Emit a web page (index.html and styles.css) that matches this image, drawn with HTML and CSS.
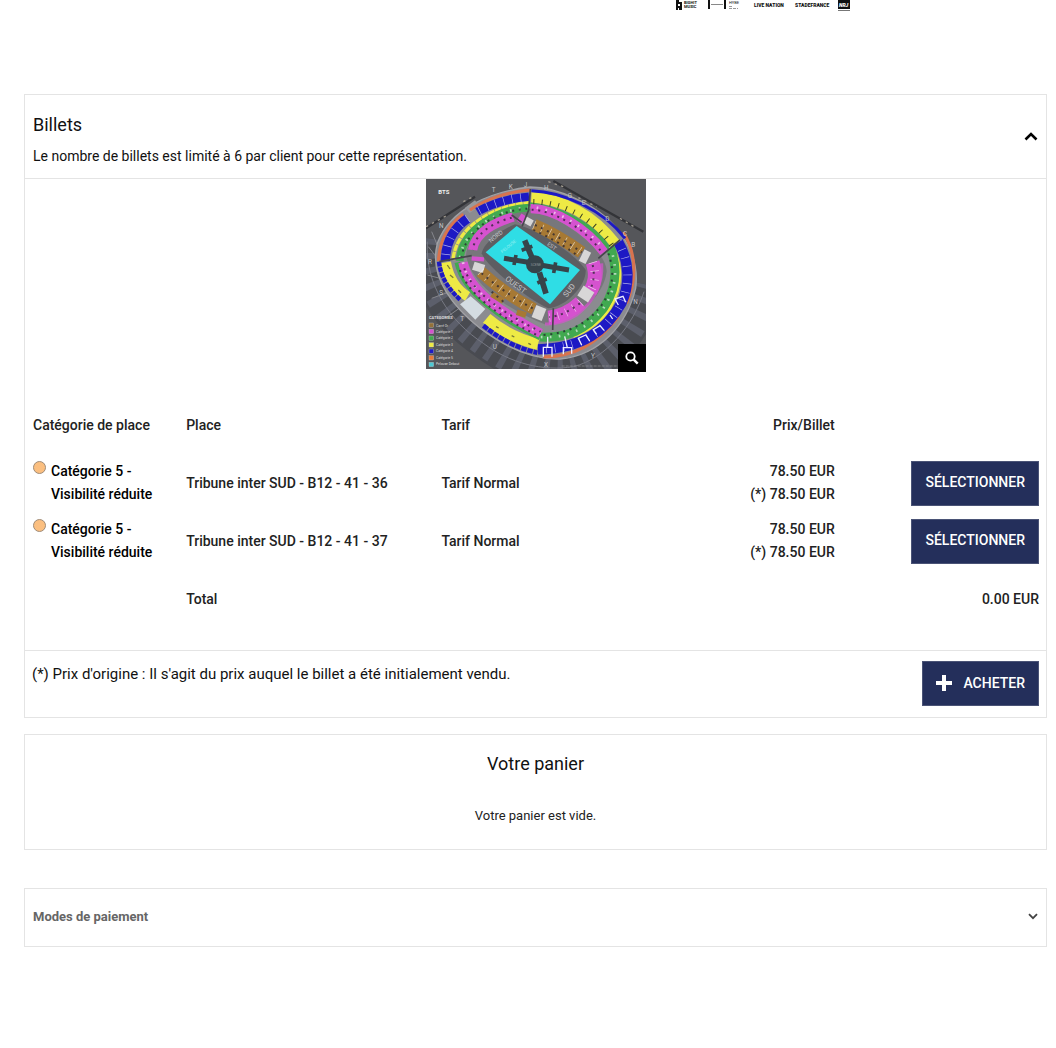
FILE: index.html
```html
<!DOCTYPE html>
<html lang="fr">
<head>
    <meta charset="UTF-8">
    <meta name="viewport" content="width=device-width, initial-scale=1.0">
    <title>Billets</title>
    <link rel="stylesheet" href="styles.css">
</head>
<body>
    <header class="partners">
        <svg class="partners-logos" width="176" height="11" viewBox="0 0 176 11" role="img" aria-label="Partenaires">
            <path d="M1 0h3v2h3v8h-3v-2h-1v2h-2zM3 4v2h2v-2z" fill="#111"/>
            <text x="9" y="4" font-size="4" font-weight="700">BIGHIT</text>
            <text x="9" y="8" font-size="4" font-weight="700">MUSIC</text>
            <path d="M33 0h2v9h-2zM49 0h2v9h-2z" fill="#111"/>
            <path d="M36 4.500h12" stroke="#888" stroke-width="1"/>
            <text x="54" y="4" font-size="4">HYBE</text>
            <path d="M54 6.500h3M54 8.500h9" stroke="#999" stroke-width="1" stroke-dasharray="3 1"/>
            <text x="79" y="7" font-size="5" font-weight="900">LIVE NATION</text>
            <text x="120" y="7" font-size="5" font-weight="900">STADEFRANCE</text>
            <rect x="163" width="12" height="9" fill="#111"/>
            <text class="nrj" x="164" y="7" font-size="5" font-weight="900">NRJ</text>
            <path d="M163 10.500h12" stroke="#777" stroke-width="1"/>
        </svg>
    </header>

    <main>
        <section class="card tickets">
            <div class="card-header">
                <div>
                    <h2>Billets</h2>
                    <p>Le nombre de billets est limité à 6 par client pour cette représentation.</p>
                </div>
                <button class="toggle" type="button" aria-label="Replier">
                    <svg width="14" height="9" viewBox="0 0 14 9"><path d="M1.500 7.500L7 2l5.500 5.500" fill="none" stroke="#000" stroke-width="2.600"/></svg>
                </button>
            </div>

            <div class="map">
                <svg class="map-plan" viewBox="18 12 660 570" role="img" aria-label="Plan de salle BTS">
                    <rect x="18" y="12" width="660" height="570" fill="#55565a"/>
                    <path d="M18 160L165 65M400 18L670 170" stroke="#333438" stroke-width="7"/>
                    <path d="M18 155L80 122M130 80L165 62M385 20L430 35M475 68L530 95M600 130L650 160" stroke="#a39c90" stroke-width="4" stroke-dasharray="7 13"/>

                    <!-- roof beams -->
                    <g fill="none">
                        <path d="M25 190C5 330 90 430 190 500C270 560 370 610 460 590C580 560 660 440 685 330" stroke="#494b51" stroke-width="100"/>
                        <path d="M25 190C5 330 90 430 190 500C270 560 370 610 460 590C580 560 660 440 685 330" stroke="#5c5f6b" stroke-width="84" stroke-dasharray="18 26"/>
                        <path d="M22 200C15 330 90 440 190 505C270 565 370 590 460 575C560 550 640 450 672 350" stroke="#777983" stroke-width="3"/>
                        <path d="M35 170L60 230M25 215L52 250M22 300L60 310M35 370L90 350M75 430L125 395" stroke="#85868c" stroke-width="3"/>
                    </g>

                    <!-- bowl -->
                    <path d="M330 36C210 50 90 100 52 205C30 290 75 375 180 460C260 520 340 555 420 552C540 540 620 450 647 340C660 240 600 130 470 72C420 48 370 36 330 36Z" fill="#8b8b90" stroke="#a2a2a6" stroke-width="4"/>
                    <path d="M280 115C220 130 145 180 138 240C150 320 250 400 380 450C460 440 550 370 560 290C560 230 450 140 330 100Z" fill="#77777b"/>
                    <path d="M135 98l30-22 14 18-30 20z" fill="#98999d"/>

                    <g fill="none">
                        <g stroke="#d9734e" stroke-width="9">
                            <path d="M331 45C270 49 200 70 150 105"/>
                            <path d="M130 118C85 150 60 190 55 258"/>
                            <path d="M610 172C645 230 655 300 620 385"/>
                            <path d="M595 425C530 510 460 545 370 546"/>
                        </g>
                        <g stroke="#eeea45">
                            <path d="M330 83C230 90 108 150 99 255" stroke-width="10" stroke-dasharray="20 2"/>
                            <path d="M334 67C430 72 520 120 585 205" stroke-width="32"/>
                            <path d="M582 225C608 280 605 340 570 400C540 445 500 470 460 485" stroke-width="8"/>
                            <path d="M78 262C87 310 107 343 143 364" stroke-width="30"/>
                            <path d="M200 430C243 467 303 495 354 508" stroke-width="34"/>
                        </g>
                        <g stroke="#1d19c4">
                            <path d="M329 65C270 69 215 86 172 110" stroke-width="25"/>
                            <path d="M143 130C100 160 77 200 76 258" stroke-width="28"/>
                            <path d="M334 47C430 50 550 105 615 190" stroke-width="9"/>
                            <path d="M594 200C630 260 630 330 604 385C560 465 490 520 354 523" stroke-width="31"/>
                            <path d="M57 260C62 308 87 343 120 374" stroke-width="13" stroke-dasharray="14 3"/>
                            <path d="M190 452C245 496 298 522 352 533" stroke-width="14" stroke-dasharray="16 3"/>
                        </g>
                        <g stroke="#41a950">
                            <path d="M328 98C240 100 125 160 119 258" stroke-width="23"/>
                            <path d="M330 88C420 98 520 145 570 225" stroke-width="12"/>
                            <path d="M570 215C595 280 590 340 550 400C500 465 440 490 360 486" stroke-width="27"/>
                            <path d="M112 262C130 350 240 430 360 487" stroke-width="17"/>
                        </g>
                        <g stroke="#d552cf">
                            <path d="M280 126C230 140 165 170 158 225" stroke-width="28"/>
                            <path d="M298 142L312 120" stroke-width="18"/>
                            <path d="M332 101C400 100 500 160 552 232" stroke-width="28"/>
                            <path d="M129 262C145 350 250 415 362 475" stroke-width="28"/>
                            <path d="M155 250L192 253" stroke-width="13"/>
                            <path d="M518 262C530 300 525 325 510 350" stroke-width="42"/>
                            <path d="M482 382C450 412 415 425 385 428" stroke-width="42"/>
                            <path d="M545 265C550 330 520 380 470 420C430 446 400 448 375 447" stroke-width="9" opacity=".7"/>
                        </g>
                        <g stroke="#a77934">
                            <path d="M342 150C390 170 440 200 485 232" stroke-width="38"/>
                            <path d="M182 290C220 325 280 370 342 402" stroke-width="36"/>
                            <path d="M215 358L250 378M290 412L318 420" stroke-width="17"/>
                        </g>
                        <g stroke="#d8d7d7">
                            <path d="M320 148L330 130" stroke-width="26"/>
                            <path d="M485 240L505 250" stroke-width="38"/>
                            <path d="M160 272L192 282" stroke-width="25"/>
                            <path d="M342 408L372 420" stroke-width="38"/>
                            <path d="M507 342L488 372" stroke-width="38"/>
                        </g>
                    </g>
                    <path d="M120 388l32-24 44 38-30 32z" fill="#d4dce2"/>

                    <!-- seat marks and aisles -->
                    <g fill="none">
                        <g stroke="#fff" stroke-width="26" stroke-dasharray="2 24" opacity=".65">
                            <path d="M329 65C270 69 215 86 172 110"/>
                            <path d="M143 130C100 160 77 200 76 258"/>
                            <path d="M594 200C630 260 630 330 604 385C560 465 490 520 354 523"/>
                            <path d="M518 262C530 300 525 325 510 350M482 382C450 412 415 425 385 428"/>
                            <path d="M342 150C390 170 440 200 485 232M182 290C220 325 280 370 342 402"/>
                        </g>
                        <g stroke="#fff" stroke-width="8" stroke-dasharray="5 22" opacity=".6">
                            <path d="M328 98C240 100 125 160 119 258"/>
                            <path d="M570 215C595 280 590 340 550 400C500 465 440 490 360 486"/>
                            <path d="M350 98C420 110 500 160 552 222"/>
                            <path d="M129 262C145 350 250 415 362 475"/>
                        </g>
                        <g stroke="#262330" stroke-width="6" stroke-dasharray="6 14" opacity=".75">
                            <path d="M275 128C230 140 165 170 158 225"/>
                            <path d="M322 101C240 105 130 160 123 258"/>
                            <path d="M335 104C400 106 500 163 545 232"/>
                            <path d="M345 150C390 170 440 200 485 232M340 165C385 185 430 210 470 240"/>
                            <path d="M185 295C220 325 280 370 342 402M215 350L250 380"/>
                            <path d="M133 280C155 350 250 415 362 470"/>
                            <path d="M518 270C525 300 520 325 510 345M480 385C450 408 415 425 388 426"/>
                            <path d="M565 235C585 290 580 340 545 390C500 450 440 475 370 480"/>
                            <path d="M120 285C145 360 240 425 350 480"/>
                        </g>
                        <path d="M340 80C430 82 520 130 575 210" stroke="#3b4220" stroke-width="16" stroke-dasharray="3 22"/>
                        <path d="M82 270l8 12M90 300l10 8M115 345l8 8M228 455l8 4M275 482l8 4M325 505l8 4" stroke="#777a35" stroke-width="4"/>
                        <path d="M331 42L326 105L302 165M535 250L600 195M58 260L155 242M275 120l30 22M400 400l-2 65" stroke="#46464c" stroke-width="5"/>
                        <g stroke="#eef" stroke-width="4">
                            <path d="M370 545v-28h26v28M383 517v-32M430 538v-20h25v18M442 518l-8-34"/>
                            <path d="M485 510l-10-20 22-10 12 18M530 478l-10-14 20-12 12 14M578 432l-8-12M595 390l-10-18 24-8 8 18"/>
                        </g>
                    </g>

                    <!-- pitch and stage -->
                    <path d="M285 148C240 165 190 205 185 235C200 275 320 370 385 400C440 395 500 330 497 285C470 240 350 160 285 148Z" fill="#5d5e62"/>
                    <path d="M290 153L480 285L390 388L197 232Z" fill="#2fdde5"/>
                    <g stroke="#37444a" fill="none">
                        <path d="M314 196L336 248M358 292L378 356" stroke-width="17"/>
                        <path d="M252 250L325 262M365 271L447 285" stroke-width="15"/>
                        <path d="M305 226l32-12M352 324l28-12M288 240l-6 30M407 262l-6 32" stroke-width="11"/>
                    </g>
                    <circle cx="345" cy="268" r="27" fill="#37444a"/>
                    <g class="map-text">
                        <text x="332" y="272" font-size="10" fill="#8b9599">SCENE</text>
                        <text x="55" y="56" font-size="18" font-weight="700" fill="#eee">BTS</text>
                        <text transform="translate(212 204) rotate(-38)" font-size="18">NORD</text>
                        <text transform="translate(380 210) rotate(35)" font-size="17">EST</text>
                        <text transform="translate(254 314) rotate(37)" font-size="23">OUEST</text>
                        <text transform="translate(440 368) rotate(-52)" font-size="23">SUD</text>
                        <text transform="translate(247 235) rotate(-40)" font-size="13" fill="#9af1f2">PELOUSE</text>
                        <g font-size="19">
                            <text x="215" y="52">T</text>
                            <text x="266" y="41">K</text>
                            <text x="311" y="37">J</text>
                            <text x="372" y="44">H</text>
                            <text x="443" y="69">G</text>
                            <text x="485" y="90">E</text>
                            <text x="556" y="137">D</text>
                            <text x="609" y="184">C</text>
                            <text x="634" y="216">B</text>
                            <text x="640" y="388">N</text>
                            <text x="57" y="160">N</text>
                            <text x="24" y="267">R</text>
                            <text x="58" y="361">S</text>
                            <text x="121" y="438">T</text>
                            <text x="218" y="522">U</text>
                            <text x="372" y="577">X</text>
                            <text x="513" y="548">Y</text>
                        </g>
                        <text x="27" y="432" font-size="12" font-weight="700" fill="#ddd">CATEGORIES</text>
                        <g font-size="10" fill="#ddd">
                            <text x="48" y="455">Carré Or</text>
                            <text x="48" y="474">Catégorie 1</text>
                            <text x="48" y="493">Catégorie 2</text>
                            <text x="48" y="513">Catégorie 3</text>
                            <text x="48" y="532">Catégorie 4</text>
                            <text x="48" y="552">Catégorie 5</text>
                            <text x="48" y="571">Pelouse Debout</text>
                        </g>
                    </g>
                    <g stroke="#ccc" stroke-width="1">
                        <rect x="27" y="444" width="14" height="13" fill="#93713a"/>
                        <rect x="27" y="463" width="14" height="13" fill="#d552cf"/>
                        <rect x="27" y="483" width="14" height="13" fill="#41a950"/>
                        <rect x="27" y="503" width="14" height="13" fill="#eeea45"/>
                        <rect x="27" y="522" width="14" height="13" fill="#1d19c4"/>
                        <rect x="27" y="542" width="14" height="13" fill="#e87838"/>
                        <rect x="27" y="562" width="14" height="13" fill="#4cc9d4"/>
                    </g>
                    <path d="M425 573h170" stroke="#999" stroke-width="2" stroke-dasharray="9 3"/>
                </svg>
                <button class="map-zoom" type="button" aria-label="Agrandir le plan">
                    <svg width="14" height="14" viewBox="0 0 14 14" fill="none" stroke="#fff"><circle cx="5.500" cy="5.500" r="4.200" stroke-width="1.800"/><path d="M8.700 8.700l4 4" stroke-width="2.400"/></svg>
                </button>
            </div>

            <table class="ticket-table">
                <thead>
                    <tr>
                        <th class="col-category">Catégorie de place</th>
                        <th class="col-seat">Place</th>
                        <th class="col-rate">Tarif</th>
                        <th class="col-price">Prix/Billet</th>
                        <td class="col-action"></td>
                    </tr>
                </thead>
                <tbody>
                    <tr>
                        <td><div class="category"><span class="dot"></span>Catégorie 5 - Visibilité réduite</div></td>
                        <td>Tribune inter SUD - B12 - 41 - 36</td>
                        <td>Tarif Normal</td>
                        <td class="price">78.50 EUR<br>(*) 78.50 EUR</td>
                        <td class="action"><button class="btn" type="button">SÉLECTIONNER</button></td>
                    </tr>
                    <tr>
                        <td><div class="category"><span class="dot"></span>Catégorie 5 - Visibilité réduite</div></td>
                        <td>Tribune inter SUD - B12 - 41 - 37</td>
                        <td>Tarif Normal</td>
                        <td class="price">78.50 EUR<br>(*) 78.50 EUR</td>
                        <td class="action"><button class="btn" type="button">SÉLECTIONNER</button></td>
                    </tr>
                </tbody>
                <tfoot>
                    <tr>
                        <td></td>
                        <td>Total</td>
                        <td></td>
                        <td></td>
                        <td class="action">0.00 EUR</td>
                    </tr>
                </tfoot>
            </table>

            <div class="card-footer">
                <p>(*) Prix d'origine : Il s'agit du prix auquel le billet a été initialement vendu.</p>
                <button class="btn" type="button">
                    <svg width="16" height="16" viewBox="0 0 16 16"><path d="M6 0h4v6h6v4h-6v6h-4v-6h-6v-4h6z" fill="#fff"/></svg>
                    ACHETER
                </button>
            </div>
        </section>

        <section class="card cart">
            <h2>Votre panier</h2>
            <p>Votre panier est vide.</p>
        </section>

        <button class="card payment" type="button">
            Modes de paiement
            <svg width="10" height="7" viewBox="0 0 10 7"><path d="M1 1.200l4 4 4-4" fill="none" stroke="#444" stroke-width="1.800"/></svg>
        </button>
    </main>
</body>
</html>
```

FILE: styles.css
```css
* {
    box-sizing: border-box;
}
body {
    font-family: Roboto, sans-serif;
    font-size: 15px;
    line-height: 23px;
    color: #222;
    background-color: #fff;
    margin: 0;
    padding: 0 9px 0 24px;
}
h2,
p {
    margin: 0;
}
h2 {
    font-size: 18px;
    font-weight: 400;
    line-height: 28px;
    color: #111;
}
button {
    font-family: inherit;
    cursor: pointer;
}
.partners {
    display: flex;
    justify-content: flex-end;
    padding-right: 196px;
    margin-bottom: 83px;
}
.partners-logos {
    display: block;
    fill: #111;
}
.partners-logos .nrj {
    fill: #fff;
    font-style: italic;
}
.card {
    background-color: #fff;
    border: 1px solid #e4e4e4;
}
.card-header {
    display: flex;
    justify-content: space-between;
    align-items: flex-start;
    padding: 16px 8px 10px;
    border-bottom: 1px solid #e4e4e4;
}
.card-header p {
    font-size: 14px;
    color: #111;
    margin-top: 6px;
}
.toggle {
    display: flex;
    margin-top: 21px;
    padding: 0;
    border: none;
    background: none;
}
.map {
    position: relative;
    width: 220px;
    margin: 0 auto 27px;
}
.map-plan {
    display: block;
    width: 100%;
}
.map-text {
    fill: #c4c4c6;
}
.map-zoom {
    position: absolute;
    right: 0;
    bottom: -3px;
    display: flex;
    justify-content: center;
    align-items: center;
    width: 28px;
    height: 28px;
    padding: 0;
    border: none;
    background-color: #000;
}
.ticket-table {
    width: 100%;
    table-layout: fixed;
    border-collapse: collapse;
    margin-bottom: 22px;
    font-size: 14px;
}
.ticket-table th,
.ticket-table td {
    height: 58px;
    padding: 0 7px 0 8px;
    text-align: left;
    font-weight: 500;
}
.col-category {
    width: 15%;
}
.col-seat {
    width: 25%;
}
.col-rate,
.col-price,
.col-action {
    width: 20%;
}
.ticket-table .col-price,
.ticket-table .price,
.ticket-table .action {
    text-align: right;
}
.category {
    display: flex;
    gap: 5px;
    color: #000;
}
.dot {
    flex: none;
    width: 13px;
    height: 13px;
    margin-top: 1px;
    border: 1px solid #a08c78;
    border-radius: 50%;
    background-color: #fbbf80;
}
.btn {
    display: inline-flex;
    align-items: center;
    gap: 11px;
    height: 45px;
    padding: 0 13px 2px;
    border: 1px solid #4a5376;
    background-color: #242f5b;
    color: #fff;
    font-size: 14px;
    font-weight: 500;
}
.card-footer {
    display: flex;
    justify-content: space-between;
    align-items: flex-start;
    padding: 10px 7px 11px;
    border-top: 1px solid #e4e4e4;
    color: #111;
}
.card-footer p {
    margin-top: 2px;
}
.cart {
    margin-top: 16px;
    padding: 15px 8px 22px;
    text-align: center;
}
.cart p {
    margin-top: 26px;
    font-size: 13px;
}
.payment {
    display: flex;
    justify-content: space-between;
    align-items: center;
    width: 100%;
    margin-top: 38px;
    padding: 16px 8px 18px;
    color: #666;
    font-size: 13px;
    font-weight: 700;
    line-height: 23px;
}
```
